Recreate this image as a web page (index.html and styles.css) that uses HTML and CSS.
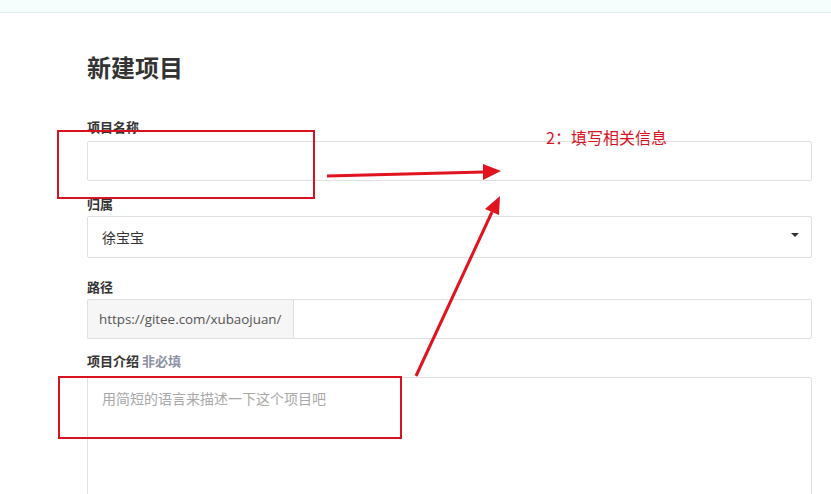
FILE: index.html
```html
<!DOCTYPE html>
<html lang="zh-CN">
<head>
    <meta charset="UTF-8">
    <meta name="viewport" content="width=device-width, initial-scale=1.0">
    <title>新建项目</title>
    <link rel="stylesheet" href="styles.css">
</head>
<body>
    <div class="top-strip"></div>

    <div class="page">
        <h1 class="page-title">新建项目</h1>

        <form class="project-form">
            <div class="field field-name">
                <label class="field-label">项目名称</label>
                <input type="text" class="text-input">
            </div>

            <div class="field field-owner">
                <label class="field-label">归属</label>
                <div class="select-box">
                    <span class="select-value">徐宝宝</span>
                    <span class="select-caret"></span>
                </div>
            </div>

            <div class="field field-path">
                <label class="field-label">路径</label>
                <div class="input-group">
                    <span class="input-addon">https://gitee.com/xubaojuan/</span>
                    <input type="text" class="text-input group-input">
                </div>
            </div>

            <div class="field field-desc">
                <label class="field-label">项目介绍 <span class="optional">非必填</span></label>
                <textarea class="text-area" placeholder="用简短的语言来描述一下这个项目吧"></textarea>
            </div>
        </form>
    </div>

    <!-- screenshot annotations -->
    <svg class="annotations" width="831" height="494" viewBox="0 0 831 494">
        <rect x="58" y="131" width="256" height="67" fill="none" stroke="#d8131f" stroke-width="2"/>
        <rect x="59" y="377" width="342" height="61" fill="none" stroke="#d8131f" stroke-width="2"/>
        <line x1="327" y1="176" x2="484" y2="172" stroke="#e0131f" stroke-width="3"/>
        <polygon points="501,171 483,164 483,180" fill="#e0131f"/>
        <line x1="416" y1="376" x2="492" y2="212" stroke="#e0131f" stroke-width="3"/>
        <polygon points="500,196 485,209 499,215" fill="#e0131f"/>
    </svg>
    <div class="note">2：填写相关信息</div>
</body>
</html>
```

FILE: styles.css
```css
* {
    box-sizing: border-box;
    margin: 0;
    padding: 0;
}

body {
    position: relative;
    background-color: #fff;
    font-family: "Noto Sans CJK SC", "Open Sans", sans-serif;
    color: #333;
    overflow: hidden;
    height: 494px;
}

.top-strip {
    height: 13px;
    background-color: #f6fdfd;
    border-bottom: 1px solid #e4eded;
}

.page {
    padding: 38px 19px 0 87px;
}

.page-title {
    font-size: 24px;
    line-height: 32px;
    font-weight: 700;
    color: #333;
    margin-bottom: 34px;
}

.field-label {
    display: block;
    font-size: 13px;
    line-height: 20px;
    font-weight: 700;
    color: #333;
    margin-bottom: 4px;
}

.field-label .optional {
    color: #8c92a4;
}

.field {
    margin-bottom: 13px;
}

.field-owner {
    margin-bottom: 19px;
}

.field-owner .field-label {
    margin-bottom: 2px;
}

.field-path .field-label {
    margin-bottom: 2px;
}

.field-path {
    margin-bottom: 12px;
}

.field-desc .field-label {
    margin-bottom: 6px;
}

.text-input {
    display: block;
    width: 100%;
    height: 40px;
    border: 1px solid #e0e0e0;
    border-radius: 2px;
    background: #fff;
    outline: none;
    font-family: inherit;
}

.select-box {
    display: flex;
    align-items: center;
    justify-content: space-between;
    height: 42px;
    padding: 0 12px 0 14px;
    border: 1px solid #e0e0e0;
    border-radius: 2px;
    font-size: 14px;
    color: #333;
}

.select-caret {
    width: 0;
    height: 0;
    border-left: 4px solid transparent;
    border-right: 4px solid transparent;
    border-top: 4px solid #333;
    margin-top: -4px;
}

.input-group {
    display: flex;
    height: 40px;
}

.input-addon {
    display: flex;
    align-items: center;
    padding: 0 11px 0 11px;
    background-color: #f6f6f6;
    border: 1px solid #e0e0e0;
    border-right: none;
    border-radius: 2px 0 0 2px;
    font-family: "Open Sans", sans-serif;
    font-size: 13.4px;
    color: #555;
    white-space: nowrap;
}

.group-input {
    flex: 1;
    height: 40px;
    border-radius: 0 2px 2px 0;
}

.text-area {
    display: block;
    width: 100%;
    height: 140px;
    padding: 10px 14px;
    border: 1px solid #e0e0e0;
    border-radius: 2px;
    resize: none;
    outline: none;
    font-family: inherit;
    font-size: 14px;
    line-height: 20px;
}

.text-area::placeholder {
    color: #a8a8a8;
}

.annotations {
    position: absolute;
    left: 0;
    top: 0;
    pointer-events: none;
}

.note {
    position: absolute;
    left: 546px;
    top: 126px;
    font-size: 16px;
    line-height: 22px;
    color: #d8131f;
}
```
